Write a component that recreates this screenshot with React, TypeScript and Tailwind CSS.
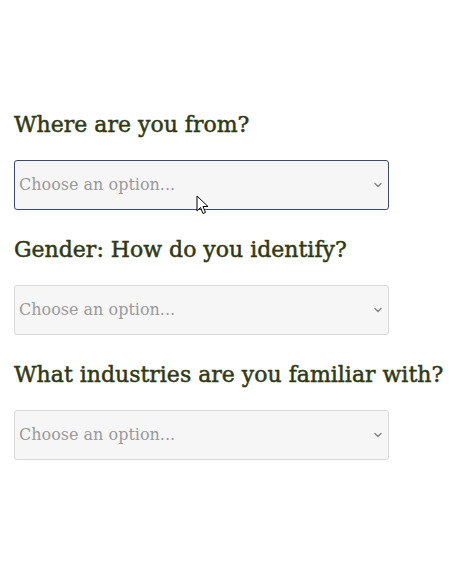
import { ChevronDown } from "lucide-react";

const questions = [
  { label: "Where are you from?", focused: true },
  { label: "Gender: How do you identify?", focused: false },
  { label: "What industries are you familiar with?", focused: false },
];

function Dropdown({ focused }: { focused: boolean }) {
  return (
    <div className="relative w-[375px]">
      <select
        defaultValue=""
        className={`h-[50px] w-full appearance-none rounded-[3px] border bg-[#f6f6f6] pl-[4px] pr-8 text-[16px] text-[#9a9a9a] outline-none ${
          focused ? "border-[#3d4a70]" : "border-[#d8d8d8]"
        }`}
        style={{ fontFamily: '"DejaVu Serif", serif' }}
      >
        <option value="" disabled>
          Choose an option...
        </option>
      </select>
      <ChevronDown
        className="pointer-events-none absolute right-[5px] top-1/2 -translate-y-1/2 text-[#8a8a8a]"
        size={12}
        strokeWidth={3}
      />
    </div>
  );
}

export default function App() {
  return (
    <div
      className="relative h-[584px] w-[460px] bg-white pl-[14px] pt-[108px]"
      style={{ fontFamily: '"DejaVu Serif", serif' }}
    >
      <div className="flex flex-col gap-[23px]">
        {questions.map((q) => (
          <div key={q.label} className="flex flex-col gap-[18px]">
            <h2 className="h-[34px] text-[22px] leading-[34px] text-[#2f3a14] [-webkit-text-stroke:0.5px_#2f3a14]">
              {q.label}
            </h2>
            <Dropdown focused={q.focused} />
          </div>
        ))}
      </div>
      <svg
        className="absolute left-[196px] top-[195px]"
        width="13"
        height="21"
        viewBox="0 0 13 21"
      >
        <path d="M1 1 L1 16 L4.5 12.5 L7 18.5 L9.5 17.5 L7 11.5 L12 11.5 Z" fill="white" stroke="black" strokeWidth="1" />
      </svg>
    </div>
  );
}
